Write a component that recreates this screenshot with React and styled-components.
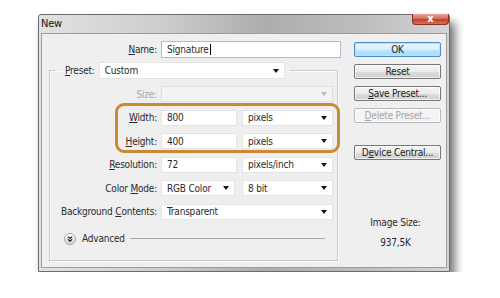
import React from 'react';
import styled, { createGlobalStyle } from 'styled-components';

const GlobalStyle = createGlobalStyle`
  html, body {
    margin: 0;
    padding: 0;
    background: #ffffff;
  }
  body {
    font-family: "DejaVu Sans Condensed", "DejaVu Sans", sans-serif;
    font-size: 10px;
    letter-spacing: -0.2px;
    color: #2a2a2a;
  }
`;

const Window = styled.div`
  position: relative;
  box-sizing: border-box;
  width: 412px;
  height: 258px;
  margin: 14px 0 0 38px;
  border: 1px solid #6c6c6c;
  border-radius: 3px 3px 0 0;
  display: flex;
  flex-direction: column;
  background: linear-gradient(90deg, #e2e2e2 0%, #cdcdcd 30%, #adadad 55%, #bdbdbd 78%, #d4d4d4 100%);
  box-shadow: 5px 8px 10px rgba(0, 0, 0, 0.55);
`;

const TitleBar = styled.div`
  height: 18px;
  display: flex;
  justify-content: space-between;
  align-items: flex-start;
  padding-left: 2px;
`;

const Title = styled.span`
  line-height: 15px;
  padding-top: 1px;
  font-size: 11px;
  color: #111;
`;

const CloseButton = styled.div`
  box-sizing: border-box;
  width: 37px;
  height: 11px;
  margin-top: -1px;
  border: 1px solid #8e2d20;
  border-top: none;
  border-radius: 0 0 4px 4px;
  background: linear-gradient(180deg, #e9a497 0%, #d36e5b 45%, #c0432e 55%, #d2725c 100%);
  color: #fff;
  font-family: "DejaVu Sans", sans-serif;
  font-weight: bold;
  font-size: 10px;
  line-height: 10px;
  text-align: center;
`;

const Body = styled.div`
  flex: 1;
  margin: 0 2px 3px 2px;
  border: 1px solid #9c9c9c;
  background: #efefef;
  display: flex;
  gap: 13px;
  padding: 7px 5px 0 7px;
`;

const FormColumn = styled.div`
  width: 292px;
  display: flex;
  flex-direction: column;
`;

const FieldRow = styled.div`
  display: grid;
  grid-template-columns: ${(p) => p.$labelWidth || 107}px ${(p) => p.$controlWidth || 172}px;
  column-gap: 4px;
  align-items: center;
  height: ${(p) => p.$height || 16}px;
`;

const Label = styled.span`
  text-align: right;
  white-space: nowrap;
  color: ${(p) => (p.$disabled ? '#a9a9a9' : '#2a2a2a')};
`;

const Key = styled.span`
  text-decoration: underline;
  text-underline-offset: 1px;
`;

const TextInput = styled.div`
  box-sizing: border-box;
  height: 100%;
  width: ${(p) => (p.$width ? `${p.$width}px` : '100%')};
  display: flex;
  align-items: center;
  padding-left: 5px;
  background: #fff;
  border: 1px solid ${(p) => (p.$focused ? '#a7bfd9' : '#e4e4e4')};
  white-space: nowrap;
`;

const Caret = styled.span`
  display: inline-block;
  width: 1px;
  height: 11px;
  background: #000;
  margin-left: 1px;
`;

const SelectBox = styled.div`
  box-sizing: border-box;
  height: 100%;
  width: ${(p) => (p.$width ? `${p.$width}px` : '100%')};
  flex-shrink: 0;
  display: flex;
  align-items: center;
  justify-content: space-between;
  padding: 0 5px;
  background: ${(p) => (p.$disabled ? '#f3f3f3' : '#fff')};
  border: 1px solid ${(p) => (p.$disabled ? '#dedede' : '#e4e4e4')};
  white-space: nowrap;
`;

const Arrow = styled.span`
  width: 0;
  height: 0;
  border-left: 3.5px solid transparent;
  border-right: 3.5px solid transparent;
  border-top: 4px solid ${(p) => (p.$disabled ? '#b8b8b8' : '#111')};
`;

const Pair = styled.div`
  display: flex;
  gap: ${(p) => p.$gap || 5}px;
  height: 100%;
`;

const Group = styled.fieldset`
  box-sizing: border-box;
  width: 289px;
  margin: 4px 0 0 0;
  padding: 7px 0 14px 0;
  border: 1px solid #cacaca;
  box-shadow: inset 1px 1px 0 #fafafa, 1px 1px 0 #fafafa;
  display: flex;
  flex-direction: column;
  gap: 7.5px;
`;

const Legend = styled.legend`
  margin-left: 5px;
  padding: 0 5px 0 2px;
`;

const LegendInner = styled.div`
  display: flex;
  align-items: center;
  gap: 4px;
  height: 17px;
`;

const LegendLabel = styled.span`
  padding-left: 8px;
  white-space: nowrap;
`;

const AdvancedRow = styled.div`
  display: flex;
  align-items: center;
  height: 14px;
  margin-top: 4.5px;
  padding: 0 12px 0 14px;
  gap: 6px;
`;

const Rule = styled.div`
  flex: 1;
  height: 1px;
  background: #a8a8a8;
  margin-left: -1px;
`;

const ButtonColumn = styled.div`
  width: 87px;
  padding-top: 1px;
  display: flex;
  flex-direction: column;
  gap: 7px;
`;

const Button = styled.div`
  box-sizing: border-box;
  height: 15px;
  margin-top: ${(p) => p.$offset || 0}px;
  border: 1px solid ${(p) => (p.$primary ? '#4d8ec4' : p.$disabled ? '#b6b9bc' : '#777')};
  border-radius: 2px;
  background: ${(p) =>
    p.$disabled
      ? '#f4f4f4'
      : p.$primary
      ? 'linear-gradient(180deg, #eaf6fd 0%, #d9eefb 50%, #bee6fd 52%, #a7d9f5 100%)'
      : 'linear-gradient(180deg, #f4f4f4 0%, #ebebeb 50%, #dddddd 52%, #cfcfcf 100%)'};
  box-shadow: inset 0 0 0 1px ${(p) => (p.$primary ? '#b9e0f8' : 'rgba(255,255,255,0.7)')};
  color: ${(p) => (p.$disabled ? '#a3a3a3' : '#222')};
  text-align: center;
  line-height: 13px;
  white-space: nowrap;
`;

const SizeInfo = styled.div`
  margin-top: 50px;
  display: flex;
  flex-direction: column;
  align-items: center;
  gap: 8px;
  line-height: 12px;
  padding-right: 4px;
`;

const Highlight = styled.div`
  position: absolute;
  left: 76px;
  top: 88px;
  width: 225px;
  height: 50px;
  box-sizing: border-box;
  border: 3px solid #c98935;
  border-radius: 9px;
  pointer-events: none;
`;

const AdvancedIcon = () => (
  <svg width="12" height="12" viewBox="0 0 12 12">
    <defs>
      <linearGradient id="adv" x1="0" y1="0" x2="0" y2="1">
        <stop offset="0" stopColor="#ffffff" />
        <stop offset="1" stopColor="#d6d6d6" />
      </linearGradient>
    </defs>
    <circle cx="6" cy="6" r="5.5" fill="url(#adv)" stroke="#a3a3a3" />
    <path d="M3.8 3.6 L6 5.4 L8.2 3.6 M3.8 6.3 L6 8.1 L8.2 6.3" fill="none" stroke="#222" strokeWidth="1.2" />
  </svg>
);

function App() {
  return (
    <>
      <GlobalStyle />
      <Window>
        <TitleBar>
          <Title>New</Title>
          <CloseButton>x</CloseButton>
        </TitleBar>
        <Body>
          <FormColumn>
            <FieldRow $labelWidth={108} $controlWidth={180} $height={17}>
              <Label>
                <Key>N</Key>ame:
              </Label>
              <TextInput $focused>
                Signature
                <Caret />
              </TextInput>
            </FieldRow>
            <Group>
              <Legend>
                <LegendInner>
                  <LegendLabel>
                    <Key>P</Key>reset:
                  </LegendLabel>
                  <SelectBox $width={186}>
                    Custom
                    <Arrow />
                  </SelectBox>
                </LegendInner>
              </Legend>
              <FieldRow>
                <Label $disabled>Size:</Label>
                <SelectBox $disabled>
                  <span />
                  <Arrow $disabled />
                </SelectBox>
              </FieldRow>
              <FieldRow>
                <Label>
                  <Key>W</Key>idth:
                </Label>
                <Pair>
                  <TextInput $width={76}>800</TextInput>
                  <SelectBox $width={91}>
                    pixels
                    <Arrow />
                  </SelectBox>
                </Pair>
              </FieldRow>
              <FieldRow>
                <Label>
                  <Key>H</Key>eight:
                </Label>
                <Pair>
                  <TextInput $width={76}>400</TextInput>
                  <SelectBox $width={91}>
                    pixels
                    <Arrow />
                  </SelectBox>
                </Pair>
              </FieldRow>
              <FieldRow>
                <Label>
                  <Key>R</Key>esolution:
                </Label>
                <Pair>
                  <TextInput $width={76}>72</TextInput>
                  <SelectBox $width={91}>
                    pixels/inch
                    <Arrow />
                  </SelectBox>
                </Pair>
              </FieldRow>
              <FieldRow>
                <Label>
                  Color <Key>M</Key>ode:
                </Label>
                <Pair $gap={7}>
                  <SelectBox $width={74}>
                    RGB Color
                    <Arrow />
                  </SelectBox>
                  <SelectBox $width={91}>
                    8 bit
                    <Arrow />
                  </SelectBox>
                </Pair>
              </FieldRow>
              <FieldRow>
                <Label>
                  Background <Key>C</Key>ontents:
                </Label>
                <SelectBox>
                  Transparent
                  <Arrow />
                </SelectBox>
              </FieldRow>
              <AdvancedRow>
                <AdvancedIcon />
                <span>Advanced</span>
                <Rule />
              </AdvancedRow>
            </Group>
          </FormColumn>
          <ButtonColumn>
            <Button $primary>OK</Button>
            <Button>Reset</Button>
            <Button>
              <Key>S</Key>ave Preset...
            </Button>
            <Button $disabled>
              <Key>D</Key>elete Preset...
            </Button>
            <Button $offset={15}>
              D<Key>e</Key>vice Central...
            </Button>
            <SizeInfo>
              <span>Image Size:</span>
              <span>937,5K</span>
            </SizeInfo>
          </ButtonColumn>
        </Body>
        <Highlight />
      </Window>
    </>
  );
}

export default App;
